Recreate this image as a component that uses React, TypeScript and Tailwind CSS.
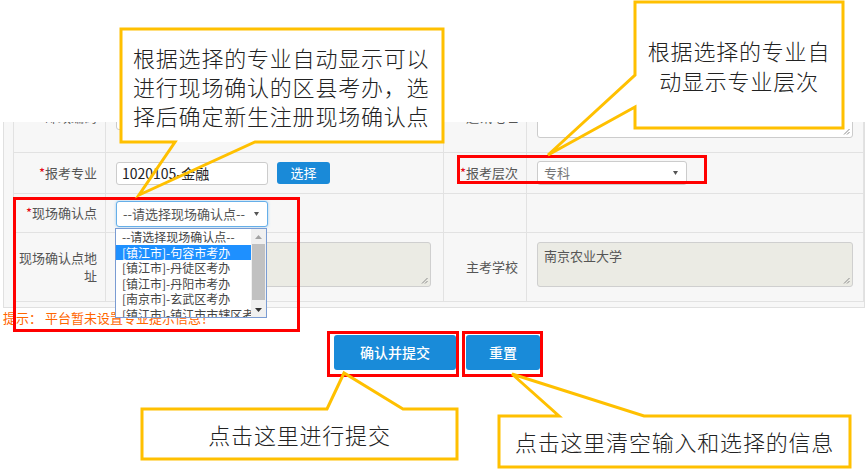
import React from 'react'

type Kids = { children?: React.ReactNode; className?: string }

function Cell({ children, className = '' }: Kids) {
  return <div className={`border-b border-r border-[#e2e2e2] ${className}`}>{children}</div>
}

function Label({ children, required }: { children: React.ReactNode; required?: boolean }) {
  return (
    <Cell className="flex items-center justify-end pr-2 text-right text-[13px] leading-[18px] text-[#555]">
      <span>
        {required ? <span className="text-[#e60012]">*</span> : null}
        {children}
      </span>
    </Cell>
  )
}

function Grip() {
  return (
    <svg className="absolute bottom-[2px] right-[2px]" width="7" height="7" viewBox="0 0 7 7">
      <path d="M6.5 1 L1 6.5 M6.5 4 L4 6.5" stroke="#8a8a8a" strokeWidth="1" />
    </svg>
  )
}

function Arrow() {
  return (
    <svg className="ml-auto mr-[8px]" width="5" height="4" viewBox="0 0 5 4">
      <path d="M0 0 H5 L2.5 4 Z" fill="#555" />
    </svg>
  )
}

function Tri({ up, color }: { up?: boolean; color: string }) {
  return (
    <svg width="7" height="4" viewBox="0 0 7 4">
      <path d={up ? 'M0 4 H7 L3.5 0 Z' : 'M0 0 H7 L3.5 4 Z'} fill={color} />
    </svg>
  )
}

const options = [
  '--请选择现场确认点--',
  '[镇江市]-句容市考办',
  '[镇江市]-丹徒区考办',
  '[镇江市]-丹阳市考办',
  '[南京市]-玄武区考办',
  '[镇江市]-镇江市市辖区考办',
]

function Dropdown() {
  return (
    <div className="absolute left-[115px] top-[228px] flex h-[90px] w-[152px] overflow-hidden border border-[#7a9cd3] bg-white text-[12px] text-[#444]">
      <div className="w-[135px] overflow-hidden">
        {options.map((o, i) => (
          <div
            key={o}
            className={
              i === 1
                ? 'h-[15.5px] whitespace-nowrap bg-[#1e90ff] pl-[6px] leading-[15.5px] text-white'
                : 'h-[15.5px] whitespace-nowrap pl-[6px] leading-[15.5px]'
            }
          >
            {o}
          </div>
        ))}
      </div>
      <div className="flex w-[15px] flex-col bg-[#f0f0f0]">
        <div className="flex h-[15px] items-center justify-center">
          <Tri up color="#a3a3a3" />
        </div>
        <div className="mx-[1px] h-[56px] bg-[#c1c1c1]" />
        <div className="mt-auto flex h-[15px] items-center justify-center">
          <Tri color="#333" />
        </div>
      </div>
    </div>
  )
}

function Callouts() {
  return (
    <svg className="pointer-events-none absolute inset-0" width="867" height="471" viewBox="0 0 867 471">
      <g fill="#fff">
        <rect x="121" y="29" width="322" height="113" />
        <rect x="635" y="2" width="208" height="126" />
        <rect x="142" y="409" width="315" height="50" />
        <rect x="499" y="416" width="351" height="51" />
      </g>
      <g fill="none" stroke="#ffc000" strokeWidth="3" strokeLinejoin="miter">
        <polygon points="121,29 443,29 443,142 255,142 139,195 175,142 121,142" />
        <polygon points="635,2 843,2 843,128 635,128 635,107 548,155 635,75" />
        <polygon points="142,409 327,409 344,373 403,409 457,409 457,459 142,459" />
        <polygon points="499,416 559,416 512,374 644,416 850,416 850,467 499,467" />
      </g>
    </svg>
  )
}

const calloutText = "text-[22px] font-light tracking-[0.8px] text-[#222] font-['Noto_Sans_CJK_SC',sans-serif]"

export default function App() {
  return (
    <div className="relative h-[471px] w-[867px] overflow-hidden bg-white font-['Noto_Sans_CJK_SC','Liberation_Sans',sans-serif]">
      <div className="h-[122px]" />

      <div className="ml-[3px] w-[862px] border-b border-l border-r border-[#e0e0e0] bg-[#f7f7f7] pb-[5px] pl-[9px]">
        <div className="grid grid-cols-[92px_338px_83px_337px] grid-rows-[31px_41px_39px_69px] border-l border-[#e2e2e2]">
          <Cell className="flex items-start justify-end overflow-hidden pr-2 text-[13px] text-[#555]">
            <div className="-mt-[12px] leading-[14px]">邮政编码</div>
          </Cell>
          <Cell className="flex items-start overflow-hidden pl-[10px]">
            <div className="-mt-[15px] h-[23px] w-[152px] rounded-[3px] border border-[#ccc] bg-white" />
          </Cell>
          <Cell className="flex items-start justify-end overflow-hidden pr-2 text-[13px] text-[#555]">
            <div className="-mt-[12px] leading-[14px]">通讯地址</div>
          </Cell>
          <Cell className="flex items-start overflow-hidden pl-[10px]">
            <div className="relative -mt-[30px] h-[46px] w-[316px] rounded-[3px] border border-[#ccc] bg-white">
              <Grip />
            </div>
          </Cell>

          <Label required>报考专业</Label>
          <Cell className="flex items-center pl-[10px]">
            <div className="flex h-[23px] w-[152px] items-center rounded-[3px] border border-[#ccc] bg-white px-[5px] text-[14px] text-[#222]">
              1020105-金融
            </div>
            <div className="ml-[9px] flex h-[22px] w-[53px] items-center justify-center rounded-[3px] bg-[#1a8ad8] text-[13px] text-white">
              选择
            </div>
          </Cell>
          <Label required>报考层次</Label>
          <Cell className="flex items-center pl-[10px]">
            <div className="flex h-[24px] w-[150px] items-center rounded-[3px] border border-[#ccc] bg-white pl-[6px] text-[13px] text-[#777]">
              专科
              <Arrow />
            </div>
          </Cell>

          <Label required>现场确认点</Label>
          <Cell className="flex items-start pl-[10px] pt-[7px]">
            <div className="flex h-[26px] w-[152px] items-center rounded-[3px] border border-[#66afe9] bg-white pl-[6px] text-[13px] text-[#555] shadow-[0_0_3px_rgba(102,175,233,0.6)]">
              --请选择现场确认点--
              <Arrow />
            </div>
          </Cell>
          <Cell />
          <Cell />

          <Label>现场确认点地址</Label>
          <Cell className="flex items-start pl-[10px] pt-[9px]">
            <div className="relative h-[45px] w-[315px] rounded-[3px] border border-[#cfcfcf] bg-[#ebebe4]">
              <Grip />
            </div>
          </Cell>
          <Label>主考学校</Label>
          <Cell className="flex items-start pl-[10px] pt-[9px]">
            <div className="relative h-[45px] w-[316px] rounded-[3px] border border-[#cfcfcf] bg-[#ebebe4] px-[6px] pt-[3px] text-[13px] text-[#555]">
              南京农业大学
              <Grip />
            </div>
          </Cell>
        </div>
      </div>

      <div className="h-[20px] pl-[3px] text-[13px] leading-[20px] text-[#ff6600]">提示： 平台暂未设置专业提示信息！</div>

      <div className="mt-[7px] flex">
        <div className="ml-[334px] flex h-[35px] w-[122px] items-center justify-center rounded-[3px] bg-[#198bd9] text-[14px] font-medium text-white">
          确认并提交
        </div>
        <div className="ml-[10px] flex h-[35px] w-[74px] items-center justify-center rounded-[3px] bg-[#198bd9] text-[14px] font-medium text-white">
          重置
        </div>
      </div>

      <Dropdown />

      <div className="absolute left-[13px] top-[197px] h-[135px] w-[287px] border-[3px] border-[#ff0000]" />
      <div className="absolute left-[457px] top-[155px] h-[29px] w-[250px] border-[3px] border-[#ff0000]" />
      <div className="absolute left-[327px] top-[331px] h-[46px] w-[132px] border-[3px] border-[#ff0000]" />
      <div className="absolute left-[462px] top-[331px] h-[46px] w-[81px] border-[3px] border-[#ff0000]" />

      <Callouts />

      <div className={`absolute left-[133px] top-[43px] leading-[29px] ${calloutText}`}>
        <div>根据选择的专业自动显示可以</div>
        <div>进行现场确认的区县考办，选</div>
        <div>择后确定新生注册现场确认点</div>
      </div>
      <div className={`absolute left-[635px] top-[35px] w-[208px] text-center leading-[30px] ${calloutText}`}>
        <div>根据选择的专业自</div>
        <div>动显示专业层次</div>
      </div>
      <div className={`absolute left-[142px] top-[409px] flex h-[50px] w-[315px] items-center justify-center ${calloutText}`}>
        点击这里进行提交
      </div>
      <div className={`absolute left-[499px] top-[416px] flex h-[51px] w-[351px] items-center justify-center ${calloutText}`}>
        点击这里清空输入和选择的信息
      </div>
    </div>
  )
}
